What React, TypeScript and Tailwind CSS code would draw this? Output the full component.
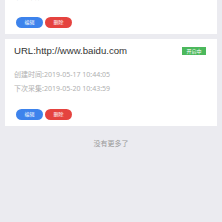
import React from 'react';

interface Task {
  url: string;
  status: string;
  createdAt: string;
  nextRun: string;
}

const tasks: Task[] = [
  { url: 'http://www.baidu.com', status: '开启中', createdAt: '2019-05-17 10:44:05', nextRun: '2019-05-19 11:38:00' },
  { url: 'http://www.baidu.com', status: '开启中', createdAt: '2019-05-17 10:44:05', nextRun: '2019-05-20 10:43:59' },
];

function TaskCard({ task }: { task: Task }) {
  return (
    <div className="mx-[5px] bg-white pl-[9px] pr-[11px] pt-[5px] pb-[6px]">
      <div className="flex h-[14px] items-center justify-between">
        <span className="font-['Liberation_Sans',sans-serif] text-[9.6px] leading-[14px] text-[#333]">URL:{task.url}</span>
        <span className="flex h-[8px] w-[24px] items-center justify-center bg-[#4cb85c] text-[5px] leading-none text-white">
          {task.status}
        </span>
      </div>
      <p className="mt-[10px] h-[14px] text-[7px] leading-[14px] text-[#b0b0b0]">创建时间:{task.createdAt}</p>
      <p className="h-[14px] text-[7px] leading-[14px] text-[#b0b0b0]">下次采集:{task.nextRun}</p>
      <div className="mt-[13px] flex gap-[2px] pl-[2px]">
        <button className="flex h-[11px] w-[27px] items-center justify-center rounded-full bg-[#3d83ec] text-[5px] leading-none text-white">
          编辑
        </button>
        <button className="flex h-[11px] w-[27px] items-center justify-center rounded-full bg-[#e5433f] text-[5px] leading-none text-white">
          删除
        </button>
      </div>
    </div>
  );
}

export default function App() {
  return (
    <div
      className="h-[222px] w-[222px] overflow-hidden bg-[#ebebf0]"
      style={{ fontFamily: '"Noto Sans", "Noto Sans CJK SC", sans-serif' }}
    >
      <div className="mt-[-53px] flex flex-col gap-[5px]">
        {tasks.map((task, i) => (
          <TaskCard key={i} task={task} />
        ))}
      </div>
      <p className="mt-[13px] text-center text-[7px] leading-[10px] text-[#999]">没有更多了</p>
    </div>
  );
}
